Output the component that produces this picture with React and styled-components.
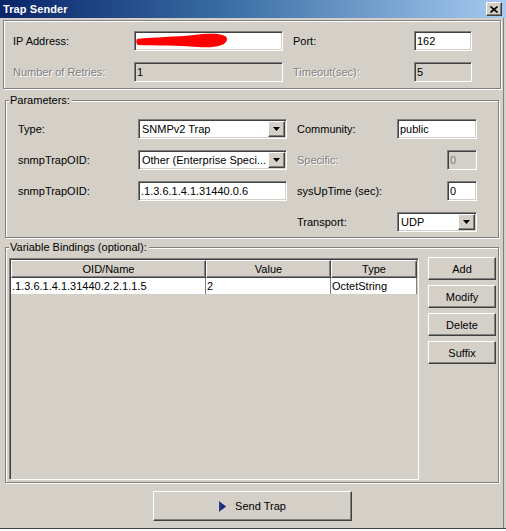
import React from 'react';
import styled, { createGlobalStyle, css } from 'styled-components';

const Global = createGlobalStyle`
  html, body { margin: 0; padding: 0; background: #ffffff; }
  body { font-family: "Liberation Sans", Arial, sans-serif; font-size: 11px; color: #000; }
  #root { width: 506px; height: 531px; }
`;

const raised = css`
  background: #d4d0c8;
  border: 1px solid;
  border-color: #ffffff #404040 #404040 #ffffff;
  box-shadow: inset -1px -1px 0 #808080;
`;

const sunken = css`
  border: 1px solid;
  border-color: #808080 #ffffff #ffffff #808080;
  box-shadow: inset 1px 1px 0 #404040, inset -1px -1px 0 #d4d0c8;
`;

const Window = styled.div`
  width: 506px;
  height: 529px;
  box-sizing: border-box;
  background: #d4d0c8;
  display: flex;
  flex-direction: column;
  border-bottom: 1px solid #404040;
`;

const TitleBar = styled.div`
  height: 18px;
  flex: none;
  display: flex;
  align-items: center;
  justify-content: space-between;
  padding: 0 4px 0 3px;
  background: linear-gradient(to right, #0a246a 0%, #3a6ea5 45%, #a6caf0 100%);
`;

const Title = styled.span`
  color: #fff;
  font-weight: bold;
  font-size: 11px;
  letter-spacing: 0.1px;
`;

const CloseBtn = styled.div`
  ${raised};
  box-sizing: border-box;
  width: 16px;
  height: 14px;
  display: flex;
  align-items: center;
  justify-content: center;
`;

const Body = styled.div`
  flex: 1;
  display: flex;
  flex-direction: column;
  border-right: 1px solid #808080;
  width: 504px;
  box-sizing: border-box;
`;

const Group = styled.div`
  position: relative;
  box-sizing: border-box;
  margin: ${p => p.$mt}px 0 0 ${p => p.$ml}px;
  width: ${p => p.$w}px;
  height: ${p => p.$h}px;
  border: 1px solid #808080;
  box-shadow: inset 1px 1px 0 #fff, 1px 1px 0 #fff;
`;

const Caption = styled.span`
  position: absolute;
  top: -7px;
  left: 3px;
  padding: 0 2px 0 1px;
  line-height: 13px;
  background: #d4d0c8;
`;

const FormGrid = styled.div`
  display: grid;
  grid-template-columns: ${p => p.$cols};
  grid-auto-rows: 20px;
  column-gap: 10px;
  row-gap: ${p => p.$rowGap}px;
  padding: ${p => p.$pad};
  align-items: center;
`;

const Label = styled.span`
  color: ${p => (p.$disabled ? '#808080' : '#000')};
  text-shadow: ${p => (p.$disabled ? '1px 1px 0 #fff' : 'none')};
  grid-column: ${p => p.$col || 'auto'};
  white-space: nowrap;
`;

const Field = styled.div`
  ${sunken};
  box-sizing: border-box;
  height: 20px;
  width: ${p => (p.$w ? `${p.$w}px` : 'auto')};
  justify-self: ${p => (p.$end ? 'end' : 'stretch')};
  background: ${p => (p.$disabled ? '#d4d0c8' : '#fff')};
  color: ${p => (p.$dim ? '#808080' : '#000')};
  padding-left: 2px;
  line-height: 18px;
  white-space: nowrap;
  overflow: hidden;
  display: flex;
  align-items: center;
`;

const Combo = styled.div`
  ${sunken};
  box-sizing: border-box;
  height: 20px;
  background: #fff;
  display: flex;
  align-items: stretch;
  padding: 1px;
  grid-column: ${p => p.$col || 'auto'};
`;

const ComboText = styled.span`
  flex: 1;
  padding-left: 2px;
  line-height: 16px;
  white-space: nowrap;
  overflow: hidden;
`;

const DropBtn = styled.div`
  ${raised};
  box-sizing: border-box;
  width: 17px;
  display: flex;
  align-items: center;
  justify-content: center;
`;

const Bindings = styled.div`
  display: flex;
  gap: 9px;
  padding: 10px 0 0 3px;
`;

const Table = styled.div`
  ${sunken};
  box-sizing: border-box;
  width: 410px;
  height: 222px;
  background: #d4d0c8;
  padding: 1px;
`;

const Row = styled.div`
  display: grid;
  grid-template-columns: 195px 125px 86px;
  height: ${p => p.$h}px;
`;

const HeadCell = styled.div`
  ${raised};
  box-sizing: border-box;
  display: flex;
  align-items: center;
  justify-content: center;
`;

const Cell = styled.div`
  box-sizing: border-box;
  background: #fff;
  border-right: 1px solid #808080;
  padding-left: 1px;
  line-height: 16px;
  white-space: nowrap;
  overflow: hidden;
`;

const ButtonCol = styled.div`
  display: flex;
  flex-direction: column;
  gap: 5px;
  margin-top: -1px;
`;

const Button = styled.div`
  ${raised};
  box-sizing: border-box;
  width: ${p => p.$w}px;
  height: ${p => p.$h}px;
  display: flex;
  align-items: center;
  justify-content: center;
  gap: 9px;
`;

const Footer = styled.div`
  display: flex;
  justify-content: center;
  padding-top: 8px;
  padding-left: 2px;
`;

const Arrow = () => (
  <svg width="7" height="4" viewBox="0 0 7 4">
    <path d="M0 0H7L3.5 4Z" fill="#000" />
  </svg>
);

const DropCombo = ({ text, col }) => (
  <Combo $col={col}>
    <ComboText>{text}</ComboText>
    <DropBtn>
      <Arrow />
    </DropBtn>
  </Combo>
);

const Redaction = () => (
  <svg width="92" height="16" viewBox="0 0 92 16" style={{ marginLeft: -1 }}>
    <path
      d="M1 6 C 18 4, 40 4, 58 2 C 74 0, 91 0, 91 6 C 91 13, 78 15, 62 14 C 42 12, 18 13, 2 12 C 0 11, 0 7, 1 6 Z"
      fill="#ff0000"
    />
  </svg>
);

export default function App() {
  return (
    <>
      <Global />
      <Window>
        <TitleBar>
          <Title>Trap Sender</Title>
          <CloseBtn>
            <svg width="8" height="7" viewBox="0 0 8 7">
              <path d="M0.5 0.5L7.5 6.5M7.5 0.5L0.5 6.5" stroke="#000" strokeWidth="1.6" />
            </svg>
          </CloseBtn>
        </TitleBar>
        <Body>
          <Group $mt={2} $ml={3} $w={498} $h={69}>
            <FormGrid $cols="111px 149px 111px 58px" $rowGap={11} $pad="10px 0 0 9px">
              <Label>IP Address:</Label>
              <Field>
                <Redaction />
              </Field>
              <Label>Port:</Label>
              <Field>162</Field>
              <Label $disabled>Number of Retries:</Label>
              <Field $disabled>1</Field>
              <Label $disabled>Timeout(sec):</Label>
              <Field $disabled>5</Field>
            </FormGrid>
          </Group>

          <Group $mt={11} $ml={5} $w={494} $h={138}>
            <Caption>Parameters:</Caption>
            <FormGrid $cols="110px 149px 90px 80px" $rowGap={11} $pad="18px 0 0 12px">
              <Label>Type:</Label>
              <DropCombo text="SNMPv2 Trap" />
              <Label>Community:</Label>
              <Field>public</Field>

              <Label>snmpTrapOID:</Label>
              <DropCombo text="Other (Enterprise Speci..." />
              <Label $disabled>Specific:</Label>
              <Field $disabled $dim $w={30} $end>0</Field>

              <Label>snmpTrapOID:</Label>
              <Field>.1.3.6.1.4.1.31440.0.6</Field>
              <Label>sysUpTime (sec):</Label>
              <Field $w={30} $end>0</Field>

              <Label $col="3">Transport:</Label>
              <DropCombo text="UDP" col="4" />
            </FormGrid>
          </Group>

          <Group $mt={9} $ml={5} $w={494} $h={236}>
            <Caption>Variable Bindings (optional):</Caption>
            <Bindings>
              <Table>
                <Row $h={18}>
                  <HeadCell>OID/Name</HeadCell>
                  <HeadCell>Value</HeadCell>
                  <HeadCell>Type</HeadCell>
                </Row>
                <Row $h={16}>
                  <Cell>.1.3.6.1.4.1.31440.2.2.1.1.5</Cell>
                  <Cell>2</Cell>
                  <Cell>OctetString</Cell>
                </Row>
              </Table>
              <ButtonCol>
                <Button $w={68} $h={23}>Add</Button>
                <Button $w={68} $h={23}>Modify</Button>
                <Button $w={68} $h={23}>Delete</Button>
                <Button $w={68} $h={23}>Suffix</Button>
              </ButtonCol>
            </Bindings>
          </Group>

          <Footer>
            <Button $w={199} $h={30}>
              <svg width="7" height="11" viewBox="0 0 7 11">
                <defs>
                  <linearGradient id="pl" x1="0" x2="1" y1="0" y2="0">
                    <stop offset="0" stopColor="#2a3f8f" />
                    <stop offset="1" stopColor="#0a1a5a" />
                  </linearGradient>
                </defs>
                <path d="M0 0L7 5.5L0 11Z" fill="url(#pl)" />
              </svg>
              <span>Send Trap</span>
            </Button>
          </Footer>
        </Body>
      </Window>
    </>
  );
}
